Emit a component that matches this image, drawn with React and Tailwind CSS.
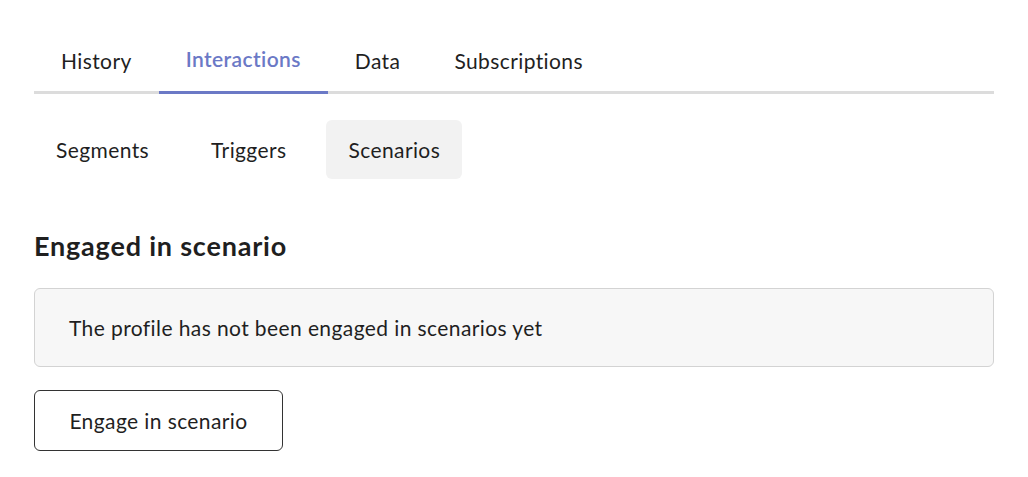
import { useState } from "react";

const topTabs = ["History", "Interactions", "Data", "Subscriptions"];
const subTabs = ["Segments", "Triggers", "Scenarios"];

export default function App() {
  const [tab, setTab] = useState("Interactions");
  const [sub, setSub] = useState("Scenarios");

  return (
    <div
      className="w-[1028px] h-[477px] bg-white text-[#1f1f1f] px-[34px] pt-[40px] tracking-[0.4px]"
      style={{ fontFamily: "Lato, 'Noto Sans', sans-serif" }}
    >
      <div className="flex border-b-[3px] border-[#dcdcdc] w-[960px]">
        {topTabs.map((t) => (
          <button
            key={t}
            onClick={() => setTab(t)}
            className={
              t === tab
                ? "px-[27px] pb-[13px] text-[21px] leading-[38px] font-semibold text-[#6b79c6] border-b-[3px] border-[#6b79c6] -mb-[3px]"
                : "px-[27px] pb-[13px] text-[21px] leading-[38px] text-[#1f1f1f] -mb-[3px]"
            }
          >
            {t}
          </button>
        ))}
      </div>

      <div className="flex gap-[18px] mt-[26px]">
        {subTabs.map((t) => (
          <button
            key={t}
            onClick={() => setSub(t)}
            className={
              t === sub
                ? "h-[59px] px-[22px] rounded-md bg-[#f2f2f2] text-[21px]"
                : "h-[59px] px-[22px] rounded-md text-[21px]"
            }
          >
            {t}
          </button>
        ))}
      </div>

      <h2 className="mt-[50px] text-[27px] leading-[34px] font-bold tracking-[0.8px]">Engaged in scenario</h2>

      <div className="mt-[25px] w-[960px] h-[79px] flex items-center px-[34px] bg-[#f7f7f7] border border-[#d3d3d3] rounded-md text-[21px]">
        The profile has not been engaged in scenarios yet
      </div>

      <button className="mt-[23px] w-[249px] h-[61px] border-[1.5px] border-[#333] rounded-md text-[21px]">
        Engage in scenario
      </button>
    </div>
  );
}
